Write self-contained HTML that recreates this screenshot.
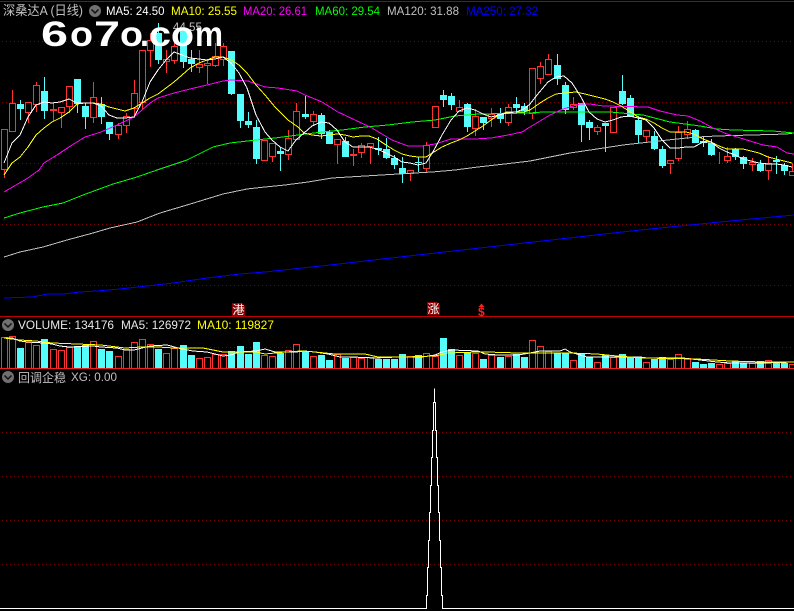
<!DOCTYPE html>
<html><head><meta charset="utf-8"><style>
html,body{margin:0;padding:0;background:#000;width:794px;height:611px;overflow:hidden}
svg{display:block;position:absolute;left:0;top:0}
text{font-family:"Liberation Sans","WenQuanYi Zen Hei","Noto Sans CJK SC",sans-serif;font-size:12px}
.l{fill:none;stroke-width:1;shape-rendering:crispEdges}
.w{fill:#fff;font-weight:bold}
</style></head><body>
<svg id="s" width="794" height="611" viewBox="0 0 794 611" xmlns="http://www.w3.org/2000/svg">
<rect width="794" height="611" fill="#000"/>
<g fill="none" stroke="#800000" stroke-dasharray="1 3" shape-rendering="crispEdges">
<path d="M2 41.5H794M2 102.5H794M2 163.5H794M2 224.5H794M2 285.5H794M2 347.5H794M2 432.5H794M2 476.5H794M2 520.5H794M2 564.5H794"/>
</g>
<path d="M0 1.5H794" stroke="#a80000" shape-rendering="crispEdges"/>
<path d="M0 316.5H794" stroke="#c00000" shape-rendering="crispEdges"/>
<g id="c" shape-rendering="crispEdges"></g>
<g id="v" shape-rendering="crispEdges"></g>
<path d="M0 368.5H794" stroke="#f02020" shape-rendering="crispEdges"/>
<polyline class="l" stroke="#0000ff" points="4,298 32,297 48,294 63,294 80,292 97,291 120,289 147,286 173,283 207,278 240,274 265,272 330,265 400,257 480,248 560,239 640,230 720,222 794,215"/>
<polyline class="l" stroke="#c0c0c0" points="4,257 20,252 43,247 67,240 93,233 110,228 137,222 160,213 187,205 223,194 247,189 265,187 285,185 308,182 332,178 365,176 398,174 432,172 455,170 478,167 505,164 530,161 550,157 570,153 597,149 623,145 650,142 677,139 697,137 717,136 787,134 794,133"/>
<polyline class="l" stroke="#00ff00" points="4,218 20,213 43,207 63,203 83,195 113,184 137,177 157,170 187,160 213,147 230,143 265,139 275,138 298,135 322,132 342,130 365,127 388,125 412,122 435,120 455,116 478,114 530,113 543,112 610,112 643,115 670,122 700,126 717,129 733,130 773,131 794,133"/>
<polyline class="l" stroke="#ff00ff" points="4,192 28,178 39,170 44,163 57,155 69,147 85,137 101,132 117,125 134,117 142,110 150,103 158,98 174,93 190,89 207,85 223,81 231,80 248,81 265,87 278,88 297,91 305,95 322,102 338,112 355,120 372,128 392,140 408,146 422,146 435,144 451,139 475,139 491,138 508,135 522,132 530,127 540,121 550,115 563,109 580,104 590,104 603,106 648,107 660,111 677,115 688,116 700,121 713,128 727,134 747,140 763,145 777,147 787,153 794,154"/>
<polyline class="l" stroke="#ffff00" points="4,175 12,163 20,157 28,147 36,135 44,128 52,122 60,118 69,112 77,104 85,103 93,103 101,104 109,107 117,109 125,111 134,108 142,103 150,98 158,94 166,88 174,82 182,75 190,68 199,63 207,60 215,57 223,57 231,60 239,65 247,73 256,85 265,95 275,107 288,120 298,127 304,133 312,135 321,136 329,135 337,134 345,135 353,137 361,136 369,136 377,139 386,145 394,150 402,154 410,156 418,157 426,157 434,152 442,147 451,143 459,140 467,136 475,131 483,126 491,120 499,115 507,112 516,112 524,112 530,110 540,103 548,98 556,94 564,93 576,92 585,94 597,97 605,99 613,102 621,106 629,111 638,117 646,119 654,123 662,128 670,132 678,132 686,132 694,134 703,139 711,142 719,146 727,149 743,149 751,151 759,153 768,157 776,159 784,161 792,163"/>
<polyline class="l" stroke="#ffffff" points="4,163 12,143 20,135 28,117 36,105 44,102 52,103 60,102 69,99 77,103 85,103 93,103 101,106 109,115 117,118 125,118 134,117 142,102 150,82 158,70 166,60 174,52 182,55 190,58 199,59 207,60 215,59 223,57 231,63 239,73 247,88 256,115 265,132 272,140 280,147 288,151 296,140 304,133 312,126 321,122 329,123 337,130 345,142 353,147 361,147 369,147 377,149 386,153 394,157 402,162 410,163 418,165 426,163 434,150 442,135 451,120 459,111 467,108 475,110 483,114 491,117 499,115 507,113 516,112 524,109 530,104 537,95 548,82 556,77 564,76 572,83 581,97 589,112 597,119 605,122 613,120 621,117 629,116 638,118 646,120 654,128 662,140 670,148 678,148 686,147 694,147 703,142 711,142 719,148 727,152 735,155 743,159 751,161 759,163 768,164 776,164 784,165 792,167"/>
<polyline class="l" stroke="#ffffff" points="4,338 12,338 20,341 28,342 44,343 52,344 60,346 69,347 93,346 101,347 117,348 125,350 134,350 142,348 150,346 167,345 182,349 193,351 207,352 215,354 223,356 231,355 239,352 256,351 265,349 275,352 285,352 296,352 304,351 315,352 328,354 340,357 352,357 375,358 398,357 422,357 435,355 442,352 452,350 478,351 485,354 498,355 518,355 530,353 540,351 560,351 565,349 570,352 587,357 607,357 640,357 647,358 673,358 683,358 700,360 717,362 730,363 763,363 794,362"/>
<polyline class="l" stroke="#ffff00" points="4,338 20,340 36,341 52,343 77,344 101,345 125,348 142,347 158,347 174,348 203,348 223,352 256,352 265,354 285,352 302,351 315,352 335,354 365,354 378,357 405,357 435,356 448,353 478,352 487,352 518,353 530,353 560,353 570,353 597,354 617,356 643,358 697,359 730,361 763,362 794,362"/>
<path fill="none" stroke="#fff" shape-rendering="crispEdges" d="M0 608.5H426.5V595.5H427.5V567.5H428.5V540.5H429.5V512.5H430.5V485.5H431.5V457.5H432.5V430.5H433.5V402.5H434.5V388.5V402.5H435.5V430.5H436.5V457.5H437.5V485.5H438.5V512.5H439.5V540.5H440.5V567.5H441.5V595.5H442.5V608.5H794"/>

<text x="3" y="15" fill="#c0c0c0" style="font-size:13px" textLength="80" lengthAdjust="spacingAndGlyphs">深桑达A (日线)</text>
<circle cx="95" cy="11" r="6" fill="#707070"/><path d="M91.5 9.5L95 13L98.5 9.5" fill="none" stroke="#111" stroke-width="1.5"/>
<text x="106" y="15" fill="#fff" textLength="58.5" lengthAdjust="spacingAndGlyphs">MA5: 24.50</text>
<text x="171" y="15" fill="#ff0" textLength="66" lengthAdjust="spacingAndGlyphs">MA10: 25.55</text>
<text x="243" y="15" fill="#f0f" textLength="64" lengthAdjust="spacingAndGlyphs">MA20: 26.61</text>
<text x="315" y="15" fill="#0f0" textLength="65" lengthAdjust="spacingAndGlyphs">MA60: 29.54</text>
<text x="387" y="15" fill="#c0c0c0" textLength="72" lengthAdjust="spacingAndGlyphs">MA120: 31.88</text>
<text x="466" y="15" fill="#0000ff" textLength="72" lengthAdjust="spacingAndGlyphs">MA250: 27.32</text>

<text x="158" y="31" fill="#c0c0c0" textLength="44" lengthAdjust="spacingAndGlyphs">← 44.55</text>
<text class="w" x="41" y="46" style="font-size:35px" textLength="27" lengthAdjust="spacingAndGlyphs">6</text>
<text class="w" x="70" y="46" style="font-size:35px" textLength="23" lengthAdjust="spacingAndGlyphs">o</text>
<text class="w" x="94" y="46" style="font-size:35px" textLength="26" lengthAdjust="spacingAndGlyphs">7</text>
<text class="w" x="120" y="46" style="font-size:35px" textLength="23" lengthAdjust="spacingAndGlyphs">o</text>
<text class="w" x="140" y="46" style="font-size:35px" textLength="9" lengthAdjust="spacingAndGlyphs">.</text>
<text class="w" x="149" y="46" style="font-size:35px" textLength="22" lengthAdjust="spacingAndGlyphs">c</text>
<text class="w" x="171" y="46" style="font-size:35px" textLength="23" lengthAdjust="spacingAndGlyphs">o</text>
<text class="w" x="195" y="46" style="font-size:35px" textLength="28" lengthAdjust="spacingAndGlyphs">m</text>

<path d="M232 303H242L245 306V316H232Z" fill="#8b0000"/>
<text x="232.5" y="314" fill="#fff" style="font-size:12px">港</text>
<path d="M427 302H437L440 305V315H427Z" fill="#8b0000"/>
<text x="427.5" y="313" fill="#fff" style="font-size:12px">涨</text>
<text x="478" y="316" fill="#ff2020" style="font-size:12px;font-weight:bold">$</text>
<path d="M481.5 303.5L478.5 307H484.5Z" fill="#ff2020"/>

<circle cx="8" cy="325" r="6" fill="#707070"/><path d="M4.5 323.5L8 327L11.5 323.5" fill="none" stroke="#111" stroke-width="1.5"/>
<text x="18" y="329" fill="#e8e8e8" textLength="96" lengthAdjust="spacingAndGlyphs">VOLUME: 134176</text>
<text x="121" y="329" fill="#e8e8e8" textLength="70" lengthAdjust="spacingAndGlyphs">MA5: 126972</text>
<text x="197" y="329" fill="#ff0" textLength="77" lengthAdjust="spacingAndGlyphs">MA10: 119827</text>

<circle cx="8" cy="377" r="6" fill="#707070"/><path d="M4.5 375.5L8 379L11.5 375.5" fill="none" stroke="#111" stroke-width="1.5"/>
<text x="18" y="382" fill="#c0c0c0" textLength="48" lengthAdjust="spacingAndGlyphs">回调企稳</text>
<text x="71" y="381" fill="#c0c0c0" textLength="46" lengthAdjust="spacingAndGlyphs">XG: 0.00</text>
</svg>
<script>
var R="#ff3232",C="#54fcfc",NS="http://www.w3.org/2000/svg";
var d=[
"R,129,169,129,177","R,103,131,90,131","C,104,108,100,119","R,102,112,102,122","R,85,104,82,111","C,91,110,77,118","R,109,110,102,120","R,107,112,107,127","R,86,106,86,112","C,79,103,79,112",
"C,106,116,103,128","R,97,117,82,122","C,104,116,97,123","C,122,133,122,139","R,125,134,123,138","R,116,125,113,132","R,93,108,80,117","R,50,102,50,109","R,40,50,33,66","C,33,59,23,63",
"R,59,61,50,72","R,46,60,33,63","C,30,61,28,67","C,59,63,50,71","R,64,67,50,72","R,63,65,59,83","R,56,65,43,66","R,46,59,43,65","C,51,93,51,94","C,94,120,94,127",
"C,121,124,112,127","C,127,158,120,163","R,140,160,140,160","R,143,156,143,161","C,151,153,147,170","R,138,154,130,159","R,111,139,103,139","C,114,116,96,118","R,114,121,111,125","C,115,133,113,138",
"C,132,143,130,143","R,139,144,139,163","C,141,156,137,156","R,154,155,149,165","R,145,152,143,157","R,143,146,143,163","C,148,149,137,154","C,149,157,138,158","C,158,164,155,168","C,168,173,157,182",
"R,170,173,170,180","C,162,162,157,171","R,145,168,142,172","R,106,127,106,127","C,95,99,90,106","C,96,104,93,109","R,107,111,100,111","C,104,126,103,131","R,116,128,109,135","C,117,122,117,129",
"R,114,118,108,126","C,114,118,108,122","R,107,122,104,125","C,104,107,97,112","C,106,110,103,114","R,68,113,68,118","R,66,78,62,83","R,59,74,54,74","C,65,78,54,84","C,85,109,82,113",
"R,104,107,97,109","C,103,124,103,141","C,122,127,120,139","R,127,131,125,134","C,123,125,123,151","R,107,132,107,132","C,91,103,75,104","C,98,116,95,116","C,120,134,116,142","R,130,136,130,141",
"C,136,148,131,149","C,149,165,146,167","R,160,163,160,173","R,132,158,126,160","R,129,134,121,138","C,130,142,129,142","C,141,142,137,146","C,143,154,139,155","R,159,159,152,163","R,156,160,147,162",
"C,149,156,148,159","C,157,163,156,168","R,162,164,158,170","C,164,170,160,171","R,163,170,156,179","C,160,161,156,173","C,165,170,163,174","R,171,175,163,175"];
var v=[337,336,348,342,345,339,349,350,347,346,345,341,349,351,356,349,342,339,344,349,353,348,345,355,358,357,354,354,351,346,354,342,355,356,353,350,344,351,356,355,360,354,358,357,358,357,359,359,359,354,356,355,353,356,338,349,355,352,353,359,355,357,356,354,357,340,346,351,353,353,360,354,357,362,355,357,354,357,357,362,359,357,359,354,358,362,364,363,364,363,361,363,363,361,360,363,363,364];
var cg=document.getElementById("c"),vg=document.getElementById("v");
function el(p,n,a){var e=document.createElementNS(NS,n);for(var k in a)e.setAttribute(k,a[k]);p.appendChild(e);}
d.forEach(function(s,i){
 var q=s.split(","),red=q[0]=="R",t=+q[1],b=+q[2],wt=+q[3],wb=+q[4],x=Math.floor(4.3+8.128*i),col=red?R:C;
 if(wt<t)el(cg,"rect",{x:x,y:wt,width:1,height:t-wt,fill:col});
 if(wb>b)el(cg,"rect",{x:x,y:b,width:1,height:wb-b+1,fill:col});
 if(red)el(cg,"rect",{x:x-2.5,y:t+.5,width:6,height:Math.max(b-t,0),fill:"#000",stroke:col});
 else el(cg,"rect",{x:x-3,y:t,width:7,height:b-t+1,fill:col});
 var vt=v[i];
 if(red)el(vg,"rect",{x:x-2.5,y:vt+.5,width:6,height:368-vt,fill:"#000",stroke:col});
 else el(vg,"rect",{x:x-3,y:vt,width:7,height:368-vt,fill:col});
});
</script>
</body></html>
